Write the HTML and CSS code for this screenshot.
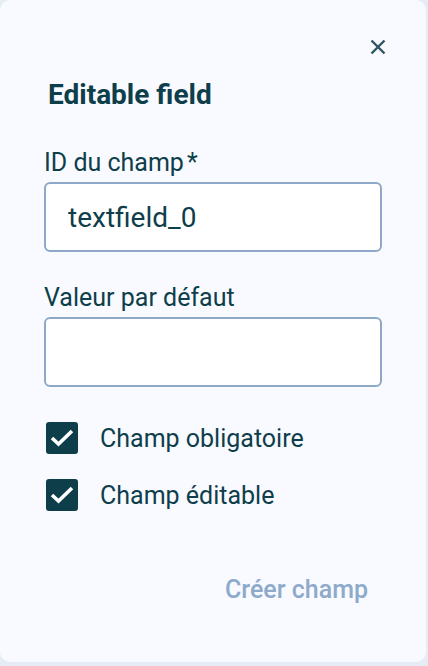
FILE: index.html
```html
<!DOCTYPE html>
<html lang="fr">
<head>
  <meta charset="UTF-8">
  <title>Editable field</title>
  <link rel="stylesheet" href="styles.css">
</head>
<body>
  <div class="panel">
    <div class="close-row">
      <button class="close" type="button" aria-label="Fermer">
        <svg width="16" height="16" viewBox="0 0 16 16">
          <path d="M1.5 1.5 L14.5 14.5 M14.5 1.5 L1.5 14.5" stroke="#2f5560" stroke-width="2.4" fill="none"/>
        </svg>
      </button>
    </div>

    <h2 class="title">Editable field</h2>

    <div class="field">
      <label for="field-id">ID du champ<span class="req">*</span></label>
      <input id="field-id" type="text" value="textfield_0">
    </div>

    <div class="field">
      <label for="field-default">Valeur par défaut</label>
      <input id="field-default" type="text" value="">
    </div>

    <div class="checks">
      <label class="check">
        <span class="box">
          <svg width="26" height="20" viewBox="0 0 26 20">
            <path d="M3 10 L9.5 16 L23 3" stroke="#fff" stroke-width="3.6" fill="none"/>
          </svg>
        </span>
        Champ obligatoire
      </label>
      <label class="check">
        <span class="box">
          <svg width="26" height="20" viewBox="0 0 26 20">
            <path d="M3 10 L9.5 16 L23 3" stroke="#fff" stroke-width="3.6" fill="none"/>
          </svg>
        </span>
        Champ éditable
      </label>
    </div>

    <div class="actions">
      <button class="create" type="button" disabled>Créer champ</button>
    </div>
  </div>
</body>
</html>
```

FILE: styles.css
```css
* {
  margin: 0;
  padding: 0;
  box-sizing: border-box;
  font-family: Roboto, 'Liberation Sans', sans-serif;
}

body {
  background-color: #e6ecf3;
  height: 666px;
  overflow: hidden;
}

.panel {
  width: 426px;
  height: 662px;
  background-color: #f8faff;
  border-radius: 10px;
  padding: 35px 44px 0 44px;
  display: flex;
  flex-direction: column;
  color: #0f3e4b;
}

.close-row {
  display: flex;
  justify-content: flex-end;
  margin-right: -8px;
}

.close {
  width: 24px;
  height: 24px;
  border: none;
  background: none;
  display: flex;
  align-items: center;
  justify-content: center;
  cursor: pointer;
}

.title {
  margin-top: 19px;
  padding-left: 4px;
  font-size: 28px;
  line-height: 33px;
  font-weight: 700;
}

.field {
  display: flex;
  flex-direction: column;
  gap: 5px;
}

.title + .field {
  margin-top: 37px;
}

.field + .field {
  margin-top: 31px;
}

.field label {
  font-size: 25px;
  line-height: 29px;
}

.req {
  margin-left: 3px;
}

.field input {
  height: 70px;
  border: 2px solid #8ea9c7;
  border-radius: 6px;
  background-color: #fff;
  padding: 0 22px;
  font-size: 28px;
  color: #0f3e4b;
  outline: none;
}

.checks {
  margin-top: 35px;
  display: flex;
  flex-direction: column;
  gap: 25px;
}

.check {
  display: flex;
  align-items: center;
  gap: 22px;
  font-size: 25px;
  margin-left: 2px;
}

.box {
  width: 32px;
  height: 32px;
  border-radius: 3px;
  background-color: #0f3e4b;
  display: flex;
  align-items: center;
  justify-content: center;
}

.actions {
  margin-top: 56px;
  display: flex;
  justify-content: flex-end;
}

.create {
  border: none;
  background: none;
  padding: 8px 14px;
  font-size: 25px;
  font-weight: 500;
  color: #8eaacb;
}
```
